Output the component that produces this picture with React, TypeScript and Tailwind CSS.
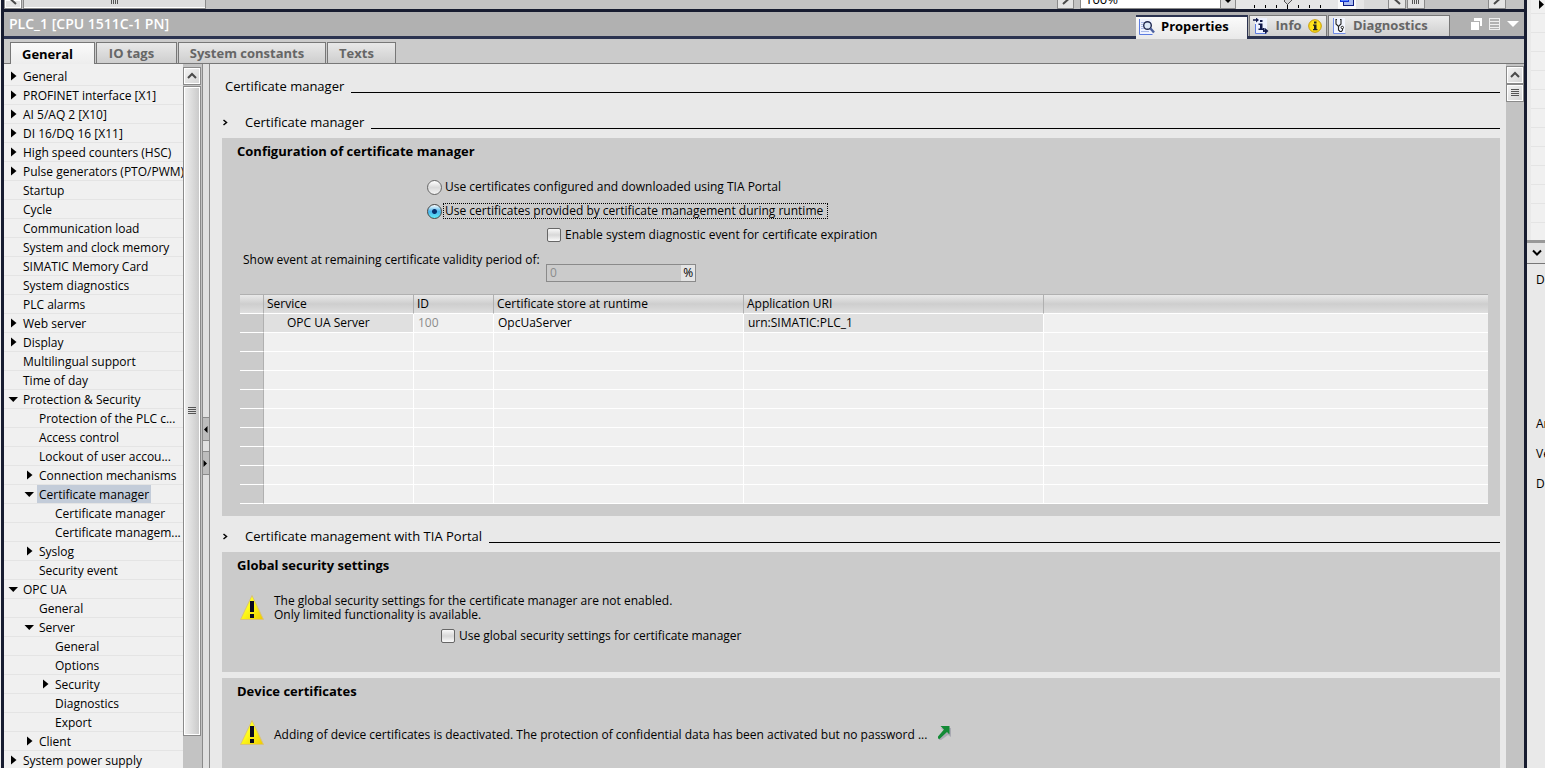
import type { ReactNode } from "react";

type TreeItem = { label: string; level: number; arrow?: "open" | "closed"; selected?: boolean };

const tree: TreeItem[] = [
  { label: "General", level: 0, arrow: "closed" },
  { label: "PROFINET interface [X1]", level: 0, arrow: "closed" },
  { label: "AI 5/AQ 2 [X10]", level: 0, arrow: "closed" },
  { label: "DI 16/DQ 16 [X11]", level: 0, arrow: "closed" },
  { label: "High speed counters (HSC)", level: 0, arrow: "closed" },
  { label: "Pulse generators (PTO/PWM)", level: 0, arrow: "closed" },
  { label: "Startup", level: 0 },
  { label: "Cycle", level: 0 },
  { label: "Communication load", level: 0 },
  { label: "System and clock memory", level: 0 },
  { label: "SIMATIC Memory Card", level: 0 },
  { label: "System diagnostics", level: 0 },
  { label: "PLC alarms", level: 0 },
  { label: "Web server", level: 0, arrow: "closed" },
  { label: "Display", level: 0, arrow: "closed" },
  { label: "Multilingual support", level: 0 },
  { label: "Time of day", level: 0 },
  { label: "Protection & Security", level: 0, arrow: "open" },
  { label: "Protection of the PLC c...", level: 1 },
  { label: "Access control", level: 1 },
  { label: "Lockout of user accou...", level: 1 },
  { label: "Connection mechanisms", level: 1, arrow: "closed" },
  { label: "Certificate manager", level: 1, arrow: "open", selected: true },
  { label: "Certificate manager", level: 2 },
  { label: "Certificate managem...", level: 2 },
  { label: "Syslog", level: 1, arrow: "closed" },
  { label: "Security event", level: 1 },
  { label: "OPC UA", level: 0, arrow: "open" },
  { label: "General", level: 1 },
  { label: "Server", level: 1, arrow: "open" },
  { label: "General", level: 2 },
  { label: "Options", level: 2 },
  { label: "Security", level: 2, arrow: "closed" },
  { label: "Diagnostics", level: 2 },
  { label: "Export", level: 2 },
  { label: "Client", level: 1, arrow: "closed" },
  { label: "System power supply", level: 0, arrow: "closed" },
];

const indents = ["pl-1", "pl-5", "pl-9"];

const scrollBtn =
  "flex shrink-0 items-center justify-center border border-[#8a8a8a] bg-linear-to-br from-[#f4f4f4] to-[#d4d4d4] shadow-[inset_0_0_0_1px_#fff]";

const Chevron = ({ d }: { d: string }) => (
  <svg width="10" height="10" viewBox="0 0 10 10" fill="none" stroke="#4a4a4a" strokeWidth="2">
    <path d={d} />
  </svg>
);

const Grip = () => (
  <svg width="8" height="8" viewBox="0 0 8 8" stroke="#555" shapeRendering="crispEdges">
    <path d="M0 .5h8M0 2.5h8M0 4.5h8M0 6.5h8" />
  </svg>
);

const VGrip = () => (
  <svg width="8" height="4" viewBox="0 0 8 4" stroke="#555" shapeRendering="crispEdges">
    <path d="M.5 0v4M2.5 0v4M4.5 0v4M6.5 0v4" />
  </svg>
);

const TreeArrow = ({ kind }: { kind?: "open" | "closed" }) => (
  <svg className="shrink-0" width="11" height="10" viewBox="0 0 11 10">
    {kind === "closed" && <path d="M3 0.5v9L8.5 5z" />}
    {kind === "open" && <path d="M0.5 3h9.500L5.250 8z" />}
  </svg>
);

const Warning = () => (
  <svg className="shrink-0" width="24" height="26" viewBox="0 0 24 26">
    <defs>
      <linearGradient id="warn" x1="0" x2="1" y1="0" y2="1">
        <stop offset="0.4" stopColor="#ffff1c" />
        <stop offset="1" stopColor="#eec900" />
      </linearGradient>
    </defs>
    <path d="M12 .5L23.5 24.5H.5z" fill="url(#warn)" stroke="#d9c27a" strokeWidth="1" />
    <path d="M10 6h4v11h-4zM10 19h4v4h-4z" fill="#0a0a20" />
  </svg>
);

const TopStrip = () => (
  <div className="flex h-[9px] shrink-0 items-end overflow-hidden bg-[#c3c3c3]">
    <div className="flex h-[9px] w-[18px] shrink-0 items-end justify-center border border-t-0 border-[#8a8a8a] bg-[#e4e4e4] pb-[3px] shadow-[inset_0_0_0_1px_#fff]">
      <Chevron d="M8 9L3 4.5L7 0" />
    </div>
    <div className="ml-[1px] flex h-[9px] w-[183px] shrink-0 items-start justify-center border border-t-0 border-[#8a8a8a] bg-[#dedede] shadow-[inset_0_-1px_0_#fff]">
      <VGrip />
    </div>
    <div className="grow" />
    <div className="flex h-[9px] w-[17px] shrink-0 items-end justify-center border border-t-0 border-[#8a8a8a] bg-[#e4e4e4] pb-[3px]">
      <Chevron d="M2 9L7 4.5L3 0" />
    </div>
    <div className="ml-[6px] flex h-[9px] w-[156px] shrink-0 border border-t-0 border-[#8a8a8a] bg-white">
      <span className="-mt-[9px] grow pl-1 text-[13px] leading-4">100%</span>
      <span className="flex w-[15px] justify-center border-l border-[#8a8a8a] bg-[#dcdcdc]">
        <svg width="6" height="4" viewBox="0 0 6 4"><path d="M0 0h6L3 3z" /></svg>
      </span>
    </div>
    <div className="flex h-[9px] w-[128px] shrink-0 items-end bg-[#e6e6e6] pl-[18px]">
      <svg width="106" height="9" viewBox="0 0 106 9" shapeRendering="crispEdges">
        <path d="M.5 5v3M11.5 5v3M22.5 5v3M33.5 4v5M44.5 5v3M55.5 5v3M66.5 5v3" stroke="#000" />
        <path d="M30 -1v2l3.500 3.500l3.500-3.500v-2z" fill="#d4d4d4" stroke="#555" />
        <path d="M84 0h18v9h-18z" fill="#fafafa" />
        <path d="M89.500-2h10v7.500h-10z" fill="#a9baf0" stroke="#0c1a80" />
        <path d="M86.500-4h8v5.500h-8z" fill="#5b86ff" stroke="#1032d8" />
      </svg>
    </div>
    <div className="flex h-[9px] w-[160px] shrink-0 bg-[#c3c3c3]">
      <div className="w-6 bg-[#d9d9d9]" />
      <div className="flex w-[18px] items-end justify-center border border-t-0 border-[#8a8a8a] bg-[#e4e4e4] pb-[3px]">
        <Chevron d="M8 9L3 4.500L7 0" />
      </div>
      <div className="ml-px flex w-[18px] items-start justify-center border border-t-0 border-[#8a8a8a] bg-[#e4e4e4]">
        <VGrip />
      </div>
      <div className="w-[63px]" />
      <div className="flex w-[18px] items-end justify-center border border-t-0 border-[#8a8a8a] bg-[#e4e4e4] pb-[3px]">
        <Chevron d="M2 9L7 4.500L3 0" />
      </div>
    </div>
  </div>
);

const PropertiesIcon = () => (
  <svg width="16" height="16" viewBox="0 0 16 16">
    <path d="M1 0h12v15H1z" fill="#eef2ff" />
    <path d="M.5 0v15.500h13" fill="none" stroke="#5b7be0" />
    <path d="M2 3.500h3M2 5.500h2M2 7.500h2M2 9.500h3M2 12.500h8" stroke="#a9b8e6" />
    <circle cx="8.500" cy="6.500" r="3.800" fill="#dce8f8" stroke="#20284e" strokeWidth="1.400" />
    <path d="M11.500 9.500l3.500 4" stroke="#4a5f9e" strokeWidth="2.400" />
  </svg>
);

const InfoIcon = () => (
  <svg width="16" height="16" viewBox="0 0 16 16">
    <path d="M2 0h12v15H2z" fill="#eef2ff" />
    <path d="M2.500 6v9.500h11" fill="none" stroke="#5b7be0" />
    <path d="M0 2h4M10 13h3" stroke="#10184a" strokeWidth="1.600" />
    <path d="M3 -.5L6 2L3 4.500zM12 10l3.500 3l-3.500 3zM10 10h1.600v4H10z" fill="#10184a" />
    <path d="M7 2h2.500v2H7zM5.500 5.500h4V10.500h1.500v1.500H5.500v-1.500H7V7H5.500z" fill="#10184a" />
  </svg>
);

const InfoBadge = () => (
  <svg width="14" height="14" viewBox="0 0 14 14">
    <circle cx="7" cy="7" r="6.300" fill="#ffe21a" stroke="#c79a00" />
    <path d="M6 2.500h2.500v2H6zM5 5.500h3.500V10h1v1.200H5V10h1V6.700H5z" fill="#222" />
  </svg>
);

const DiagnosticsIcon = () => (
  <svg width="13" height="16" viewBox="0 0 13 16">
    <path d="M0 0h12v15H0z" fill="#f2f5ff" />
    <path d="M.5 0v15.500h12" fill="none" stroke="#6f8be6" />
    <path d="M4 1.500H3V6l2 2h1l2-2V1.500H7M5.500 8v4l1.500 1.500h1.500L9.500 12v-2" fill="none" stroke="#222" strokeWidth="1.100" />
    <circle cx="9.300" cy="9.500" r="1.200" fill="#fff" stroke="#222" />
  </svg>
);

const TitleBar = () => (
  <header className="flex h-[27px] shrink-0 items-end border-b-3 border-[#2b3350] bg-[#b1b1b1]">
    <h1 className="grow self-center pl-[5px] text-[14px] leading-6 font-semibold text-white">PLC_1 [CPU 1511C-1 PN]</h1>
    <div className="flex items-end gap-[1px] text-[13px] font-bold">
      <button className="relative -mb-[3px] flex h-6 w-28 items-center border-t-2 border-r border-[#2b3350] bg-linear-to-b from-[#fbfbfb] to-[#e9e9e9] pb-[2px] pl-[3px]">
        <PropertiesIcon />
        <span className="pl-[6px]">Properties</span>
      </button>
      <button className="flex h-[21px] w-[78px] items-center border border-b-0 border-[#777] bg-linear-to-b from-[#ececec] to-[#cfcfcf] pl-[3px] text-[#666]">
        <InfoIcon />
        <span className="grow text-center">Info</span>
        <span className="pr-1"><InfoBadge /></span>
      </button>
      <button className="flex h-[21px] w-[122px] items-center border border-b-0 border-[#777] bg-linear-to-b from-[#ececec] to-[#cfcfcf] pl-1 text-[#666]">
        <DiagnosticsIcon />
        <span className="pl-[7px]">Diagnostics</span>
      </button>
    </div>
    <div className="ml-[21px] flex gap-[7px] self-center pr-[5px]">
      <svg width="11" height="12" viewBox="0 0 11 12" fill="#fff">
        <path d="M3 0h8v8H9V3H3z" />
        <path d="M0 4h8v8H0z" />
      </svg>
      <svg width="11" height="12" viewBox="0 0 11 12" fill="none" stroke="#eee" shapeRendering="crispEdges">
        <path d="M.5 .5h10v11H.5zM0 3.500h11M0 6.500h11M0 9.500h11" />
      </svg>
      <svg width="12" height="12" viewBox="0 0 12 12" fill="#fff"><path d="M0 3h12L6 9z" /></svg>
    </div>
  </header>
);

const Tab = ({ label, active, size }: { label: string; active?: boolean; size: string }) => (
  <button
    className={
      "border border-b-0 border-[#777] pr-[10px] text-center text-[13px] font-bold " +
      size +
      (active ? " -mb-px h-[22px] bg-linear-to-b from-[#fafafa] to-[#ededed]" : " h-[21px] bg-linear-to-b from-[#e8e8e8] to-[#cecece] text-[#666]")
    }
  >
    <span className="block leading-4">{label}</span>
  </button>
);

const Tree = () => (
  <nav className="w-[179px] shrink-0 overflow-hidden bg-[#f0f0f0] pt-[3px]">
    <ul>
      {tree.map((item, i) => (
        <li key={i} className={"flex h-[19px] items-center border-b border-[#e4e4e4] " + indents[item.level]}>
          <TreeArrow kind={item.arrow} />
          <a href="#" className={"ml-[2px] px-[2px] pt-[2px] leading-4 whitespace-nowrap " + (item.selected ? "bg-[#c3ccd9]" : "")}>
            {item.label}
          </a>
        </li>
      ))}
    </ul>
  </nav>
);

const Heading = ({ children, marker }: { children: ReactNode; marker?: boolean }) => (
  <div className="mt-1 flex h-8 items-center pl-[3px]">
    {marker && (
      <svg className="mr-[17px] -ml-[3px] shrink-0" width="6" height="7" viewBox="0 0 6 7" fill="none" stroke="#000" strokeWidth="1.500">
        <path d="M1.500 1l3 2.500l-3 2.500" />
      </svg>
    )}
    <h2 className="shrink-0 text-[13px] leading-4">{children}</h2>
    <div className="mt-3 ml-[7px] h-px grow bg-black" />
  </div>
);

const checkbox =
  "size-[14px] shrink-0 appearance-none rounded-[2px] border border-[#666] bg-linear-to-b from-[#f8f8f8] via-[#d8d8d8] to-[#fafafa]";
const radio =
  "size-[15px] shrink-0 appearance-none rounded-full border border-[#666] bg-linear-to-b from-[#fff] via-[#dadada] to-[#f4f4f4] checked:border-[#444] checked:bg-[radial-gradient(circle_at_50%_50%,#06306e_0_2px,#ffffff00_3px),linear-gradient(#fff,#49b4ec_50%,#5feaf8)]";

const columns = ["Service", "ID", "Certificate store at runtime", "Application URI", ""];

const ServiceTable = () => (
  <table className="w-full table-fixed border-separate border-spacing-0 text-left">
    <colgroup>
      <col className="w-6" />
      <col className="w-[150px]" />
      <col className="w-20" />
      <col className="w-[250px]" />
      <col className="w-[300px]" />
      <col />
    </colgroup>
    <thead>
      <tr className="bg-linear-to-b from-[#ececec] via-[#cecece] to-[#e0e0e0]">
        <th className="h-5 border-y border-r border-[#b0b0b0] border-b-white p-0" />
        {columns.map((c) => (
          <th key={c} className="h-5 border-y border-r border-[#b0b0b0] border-b-white p-0 pl-[3px] leading-[18px] font-normal last:border-r-0">
            {c}
          </th>
        ))}
      </tr>
    </thead>
    <tbody>
      <tr className="bg-[#f0f0f0]">
        <td className="h-[19px] border-r border-b border-r-[#b0b0b0] border-b-white bg-[#cbcbcb] p-0" />
        <td className="border-r border-b border-white bg-[#e0e0e0] p-0 pl-[23px] leading-[18px]">OPC UA Server</td>
        <td className="border-r border-b border-white p-0 pl-1 leading-[18px] text-[#8c8c8c]">100</td>
        <td className="border-r border-b border-white p-0 pl-1 leading-[18px]">OpcUaServer</td>
        <td className="border-r border-b border-white bg-[#e0e0e0] p-0 pl-1 leading-[18px]">urn:SIMATIC:PLC_1</td>
        <td className="border-b border-white p-0" />
      </tr>
      {Array.from({ length: 9 }, (_, row) => (
        <tr key={row} className="bg-[#f0f0f0]">
          <td className="h-[19px] border-r border-b border-r-[#b0b0b0] border-b-white bg-[#cbcbcb] p-0" />
          {columns.map((c) => (
            <td key={c} className="border-r border-b border-white p-0 last:border-r-0" />
          ))}
        </tr>
      ))}
    </tbody>
  </table>
);

const PanelTitle = ({ children }: { children: ReactNode }) => (
  <h3 className="h-[26px] pl-[15px] text-[13px] leading-[26px] font-bold">{children}</h3>
);

const Content = () => (
  <main className="min-w-0 grow overflow-hidden bg-[#e9e9e9] pt-[2px] pr-[6px] pl-3">
    <Heading>Certificate manager</Heading>
    <Heading marker>Certificate manager</Heading>

    <section className="bg-[#cbcbcb] pb-3">
      <PanelTitle>Configuration of certificate manager</PanelTitle>
      <div className="flex flex-col pt-[11px] pl-[205px]">
        <label className="flex h-6 items-center gap-[3px]">
          <input type="radio" name="source" className={radio} />
          Use certificates configured and downloaded using TIA Portal
        </label>
        <label className="flex h-6 items-center">
          <input type="radio" name="source" defaultChecked className={radio} />
          <span className="ml-[1px] border border-dotted border-black pr-1 pl-[1px] leading-[14px]">
            Use certificates provided by certificate management during runtime
          </span>
        </label>
        <label className="ml-[120px] flex h-6 items-center gap-1">
          <input type="checkbox" className={checkbox} />
          Enable system diagnostic event for certificate expiration
        </label>
      </div>
      <div className="flex h-[47px] items-start pl-[21px]">
        <label htmlFor="validity" className="w-[303px] pt-[5px] leading-4">
          Show event at remaining certificate validity period of:
        </label>
        <div className="mt-[17px] flex h-[18px] w-[150px] border border-[#8a8a8a]">
          <input id="validity" disabled defaultValue="0" className="min-w-0 grow pl-[3px] text-[#8c8c8c]" />
          <span className="w-4 bg-[#e4e4e4] text-center leading-4">%</span>
        </div>
      </div>
      <div className="pr-3 pl-[18px]">
        <ServiceTable />
      </div>
    </section>

    <Heading marker>Certificate management with TIA Portal</Heading>

    <section className="bg-[#cbcbcb] pb-[23px]">
      <PanelTitle>Global security settings</PanelTitle>
      <div className="flex items-center gap-[10px] pt-4 pl-[18px]">
        <Warning />
        <p className="leading-[14px]">
          The global security settings for the certificate manager are not enabled.
          <br />
          Only limited functionality is available.
        </p>
      </div>
      <label className="flex h-[27px] items-center gap-1 pl-[219px]">
        <input type="checkbox" className={checkbox} />
        Use global security settings for certificate manager
      </label>
    </section>

    <section className="mt-[6px] h-[120px] bg-[#cbcbcb]">
      <PanelTitle>Device certificates</PanelTitle>
      <div className="flex items-center gap-[10px] pt-4 pl-[18px]">
        <Warning />
        <p className="pt-1">Adding of device certificates is deactivated. The protection of confidential data has been activated but no password ...</p>
        <a href="#" aria-label="Go to settings">
          <svg width="14" height="14" viewBox="0 0 14 14">
            <path d="M4 2h10v9l-3-2l-7 5H2v-3l6-5z" fill="#a9a9b2" />
            <path d="M3.500 0h9v8.500l-2.500-2.500l-7.500 7L1 12.500V10.500L7 3.500z" fill="#128a35" />
          </svg>
        </a>
      </div>
    </section>
  </main>
);

const RightPane = () => (
  <aside className="flex w-[18px] shrink-0 flex-col overflow-hidden bg-[#e9e9e9]">
    <div className="ml-1 h-60 shrink-0 overflow-hidden bg-[#f0f0f0]">
      <div className="flex h-[14px] items-start justify-end border-b border-[#e4e4e4]">
        <svg width="8" height="10" viewBox="0 0 8 10"><path d="M2 0v9l5-4.500z" /></svg>
      </div>
      {Array.from({ length: 11 }, (_, i) => (
        <div key={i} className="h-[19px] border-b border-[#e4e4e4]" />
      ))}
    </div>
    <button aria-label="Toggle section" className="flex h-6 shrink-0 items-center justify-end border-t-3 border-b border-t-[#999] border-b-[#777] bg-[#e4e4e4] pr-[3px]">
      <svg width="10" height="8" viewBox="0 0 10 8" fill="none" stroke="#000" strokeWidth="2"><path d="M1 1.500l4 4l4-4" /></svg>
    </button>
    <div className="flex flex-col pt-2 pl-[9px] leading-4">
      <span>De</span>
      <span className="mt-32">An</span>
      <span className="mt-[14px]">Ve</span>
      <span className="mt-[14px]">De</span>
    </div>
  </aside>
);

const Splitter = () => (
  <div className="flex w-2 shrink-0 flex-col border-x border-[#8a8a8a] bg-[#e0e0e0] pt-[353px]">
    <button aria-label="Collapse left" className="flex h-6 items-center border-y border-[#8a8a8a] bg-[#bdbdbd]">
      <svg width="5" height="7" viewBox="0 0 5 7"><path d="M4.500 0v7L1 3.500z" /></svg>
    </button>
    <button aria-label="Collapse right" className="mt-[10px] flex h-6 items-center border-y border-[#8a8a8a] bg-[#bdbdbd]">
      <svg width="5" height="7" viewBox="0 0 5 7"><path d="M.5 0v7L4 3.500z" /></svg>
    </button>
  </div>
);

export default function App() {
  return (
    <div className="flex h-screen overflow-hidden bg-[#f0f0f0] pl-[1px] font-['Open_Sans','Noto_Sans',sans-serif] text-[12px] text-black">
      <div className="flex min-w-0 grow flex-col border-x-3 border-[#171c30]">
        <TopStrip />
        <div className="h-[3px] shrink-0 bg-[#171c30]" />
        <TitleBar />
        <div className="flex h-[25px] shrink-0 items-end gap-[1px] border-b border-[#777] bg-[#cbcbcb] pl-[6px]">
          <Tab label="General" active size="w-[85px]" />
          <Tab label="IO tags" size="w-[81px]" />
          <Tab label="System constants" size="w-[148px]" />
          <Tab label="Texts" size="w-[69px]" />
        </div>
        <div className="flex min-h-0 grow">
          <Tree />
          <div className="flex w-[19px] shrink-0 flex-col bg-[#c3c3c3] pt-[3px] pr-[1px]">
            <button aria-label="Scroll up" className={"h-[18px] " + scrollBtn}>
              <Chevron d="M1 7l4-4l4 4" />
            </button>
            <div className="mt-px flex h-[650px] shrink-0 items-center justify-center border border-[#8a8a8a] bg-linear-to-r from-[#f0f0f0] to-[#c8c8c8] shadow-[inset_0_0_0_1px_#fff]">
              <Grip />
            </div>
          </div>
          <Splitter />
          <Content />
          <div className="flex w-[18px] shrink-0 flex-col bg-[#c3c3c3] pt-[2px]">
            <button aria-label="Scroll up" className={"h-[18px] " + scrollBtn}>
              <Chevron d="M1 7l4-4l4 4" />
            </button>
            <div className={"h-[18px] " + scrollBtn}>
              <Grip />
            </div>
          </div>
        </div>
      </div>
      <RightPane />
    </div>
  );
}
